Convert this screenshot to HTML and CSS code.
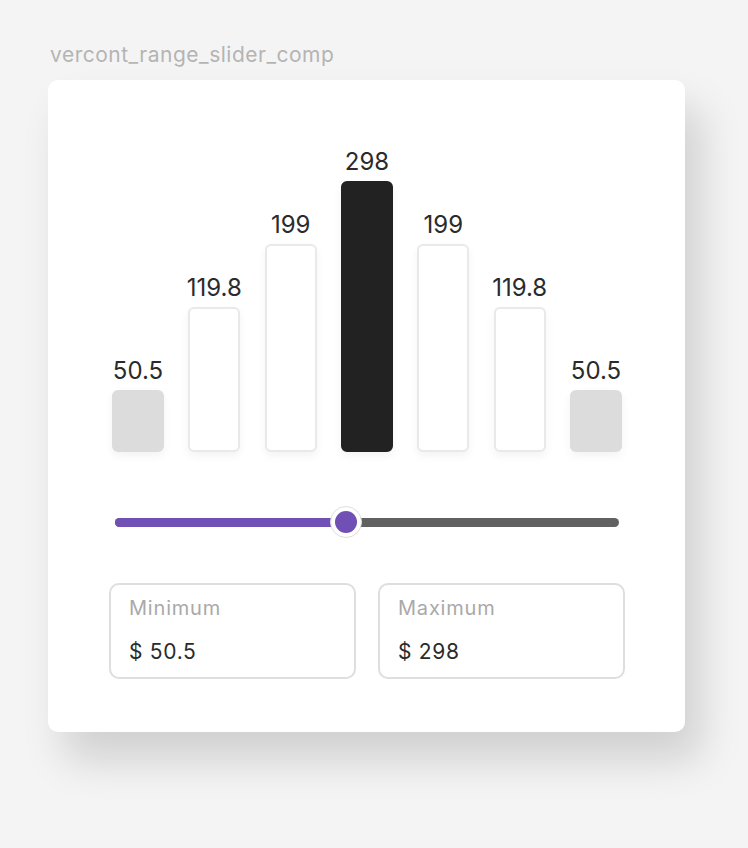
FILE: index.html
```html
<!DOCTYPE html>
<html lang="en">
<head>
    <meta charset="UTF-8">
    <meta name="viewport" content="width=device-width, initial-scale=1.0">
    <title>vercont_range_slider_comp</title>
    <link rel="stylesheet" href="styles.css">
</head>
<body>

    <div class="page-title">vercont_range_slider_comp</div>

    <div class="card">
        <div class="chart">
            <div class="column">
                <span class="value">50.5</span>
                <div class="bar bar-muted" style="height:62px"></div>
            </div>
            <div class="column">
                <span class="value">119.8</span>
                <div class="bar" style="height:145px"></div>
            </div>
            <div class="column">
                <span class="value">199</span>
                <div class="bar" style="height:208px"></div>
            </div>
            <div class="column">
                <span class="value">298</span>
                <div class="bar bar-active" style="height:271px"></div>
            </div>
            <div class="column">
                <span class="value">199</span>
                <div class="bar" style="height:208px"></div>
            </div>
            <div class="column">
                <span class="value">119.8</span>
                <div class="bar" style="height:145px"></div>
            </div>
            <div class="column">
                <span class="value">50.5</span>
                <div class="bar bar-muted" style="height:62px"></div>
            </div>
        </div>

        <div class="slider">
            <div class="track">
                <div class="track-fill" style="width:45.8%"></div>
            </div>
            <div class="thumb" style="left:45.8%"><span class="thumb-dot"></span></div>
        </div>

        <div class="fields">
            <div class="field">
                <span class="field-label">Minimum</span>
                <span class="field-value">$ 50.5</span>
            </div>
            <div class="field">
                <span class="field-label">Maximum</span>
                <span class="field-value">$ 298</span>
            </div>
        </div>
    </div>

</body>
</html>
```

FILE: styles.css
```css
html {
    background-color: #f4f4f4;
}
body {
    font-family: Inter, 'Noto Sans', sans-serif;
    background-color: #f4f4f4;
    margin: 0;
    padding: 43px 0 0 48px;
    min-height: 100vh;
    box-sizing: border-box;
    color: #2b2b2b;
}
.page-title {
    font-size: 21px;
    line-height: 24px;
    letter-spacing: 0.5px;
    color: #b4b4b4;
    margin: 0 0 13px 2px;
}
.card {
    width: 637px;
    box-sizing: border-box;
    padding: 68px 63px 53px 64px;
    background: #fff;
    border-radius: 10px;
    box-shadow: 16px 28px 42px rgba(0, 0, 0, 0.15);
}
.chart {
    display: flex;
    justify-content: space-between;
    align-items: flex-end;
}
.column {
    width: 52px;
    display: flex;
    flex-direction: column;
    align-items: center;
}
.value {
    font-size: 24px;
    line-height: 28px;
    margin-bottom: 5px;
    color: #2b2b2b;
    white-space: nowrap;
}
.bar {
    width: 100%;
    box-sizing: border-box;
    border: 2px solid #e9e9e9;
    border-radius: 6px;
    background: #fff;
    box-shadow: 0 4px 10px rgba(0, 0, 0, 0.05);
}
.bar-muted {
    background: #dcdcdc;
    border-color: #dcdcdc;
}
.bar-active {
    background: #222;
    border-color: #222;
}
.slider {
    position: relative;
    height: 32px;
    margin: 54px 3px 0;
    display: flex;
    align-items: center;
}
.track {
    width: 100%;
    height: 9px;
    border-radius: 5px;
    background: #616161;
    overflow: hidden;
}
.track-fill {
    height: 100%;
    background: #7050b4;
}
.thumb {
    position: absolute;
    top: 0;
    width: 32px;
    height: 32px;
    margin-left: -16px;
    box-sizing: border-box;
    border: 1px solid #dedede;
    border-radius: 50%;
    background: #fff;
    display: flex;
    align-items: center;
    justify-content: center;
}
.thumb-dot {
    width: 22px;
    height: 22px;
    border-radius: 50%;
    background: #7050b4;
}
.fields {
    display: grid;
    grid-template-columns: 1fr 1fr;
    gap: 22px;
    margin: 45px -3px 0;
}
.field {
    height: 96px;
    box-sizing: border-box;
    padding: 13px 18px;
    border: 2px solid #dedede;
    border-radius: 10px;
    display: flex;
    flex-direction: column;
    gap: 21px;
}
.field-label {
    font-size: 20px;
    line-height: 20px;
    letter-spacing: 0.8px;
    color: #a9a9a9;
}
.field-value {
    font-size: 21px;
    line-height: 26px;
    letter-spacing: 0.7px;
    color: #2b2b2b;
}
```
